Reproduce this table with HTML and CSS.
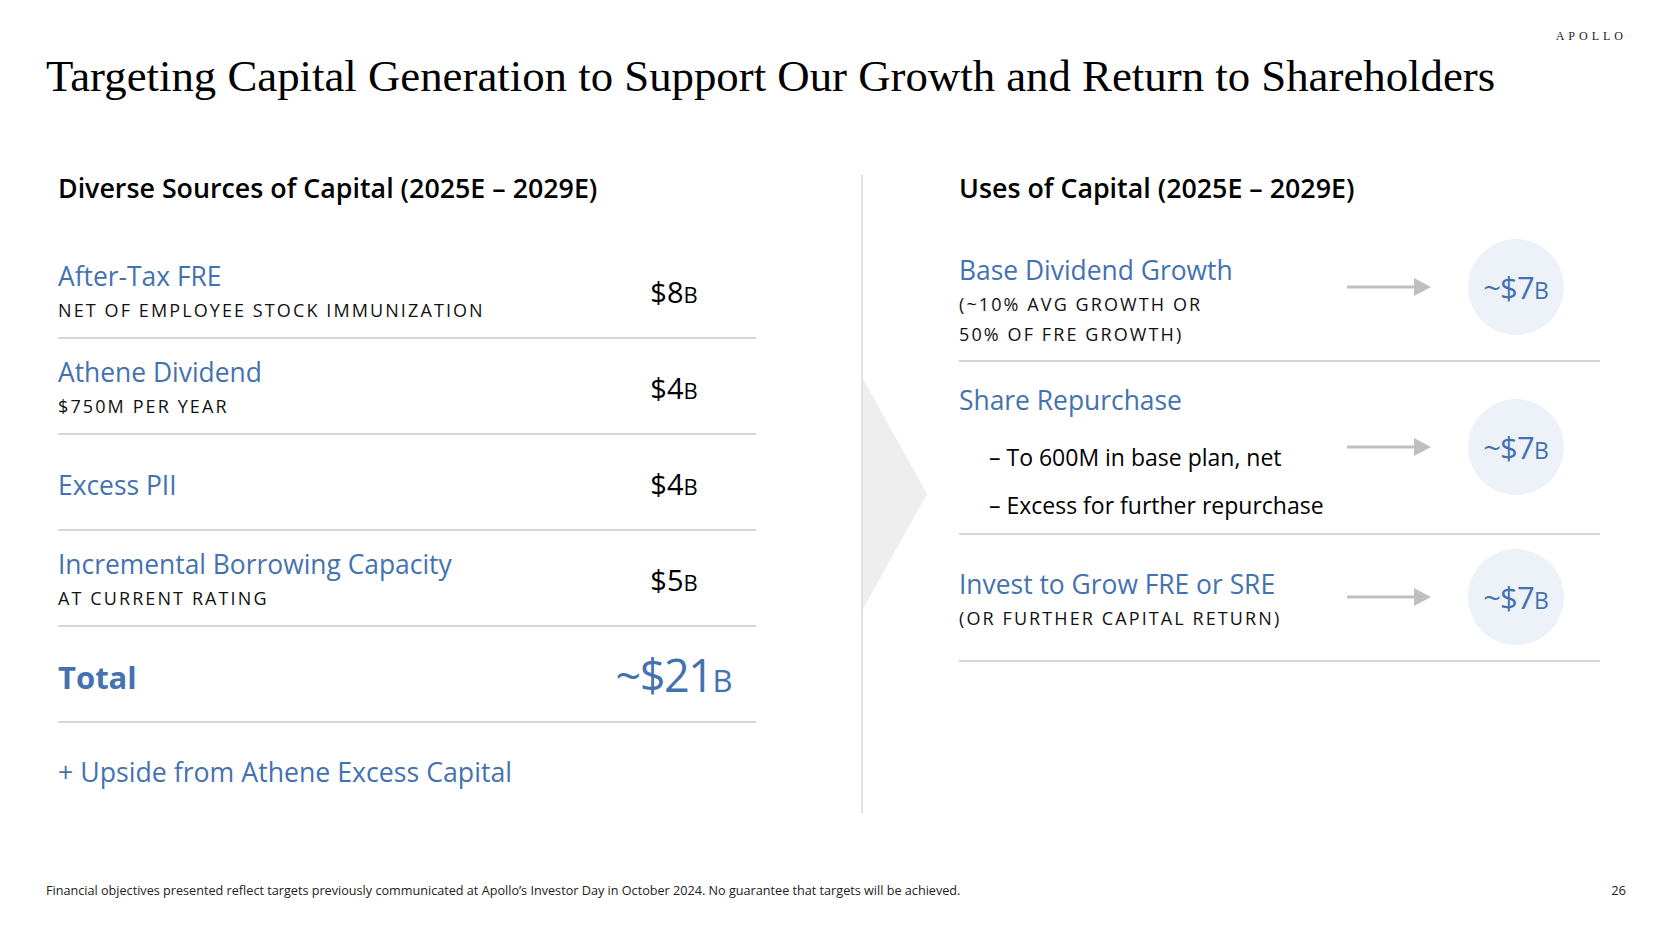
FILE: index.html
```html
<!DOCTYPE html>
<html lang="en">
<head>
<meta charset="utf-8">
<title>Targeting Capital Generation</title>
<link rel="stylesheet" href="styles.css">
</head>
<body>
<div class="slide">
  <header class="top">
    <div class="brand">APOLLO</div>
    <h1 class="title">Targeting Capital Generation to Support Our Growth and Return to Shareholders</h1>
  </header>

  <main class="content">
    <section class="sources">
      <h2 class="col-head">Diverse Sources of Capital (2025E – 2029E)</h2>

      <div class="src-row">
        <div class="src-text">
          <div class="label">After-Tax FRE</div>
          <div class="sub">NET OF EMPLOYEE STOCK IMMUNIZATION</div>
        </div>
        <div class="val">$8<span class="u">B</span></div>
      </div>

      <div class="src-row">
        <div class="src-text">
          <div class="label">Athene Dividend</div>
          <div class="sub">$750M PER YEAR</div>
        </div>
        <div class="val">$4<span class="u">B</span></div>
      </div>

      <div class="src-row">
        <div class="src-text">
          <div class="label">Excess PII</div>
        </div>
        <div class="val">$4<span class="u">B</span></div>
      </div>

      <div class="src-row">
        <div class="src-text">
          <div class="label">Incremental Borrowing Capacity</div>
          <div class="sub">AT CURRENT RATING</div>
        </div>
        <div class="val">$5<span class="u">B</span></div>
      </div>

      <div class="src-row">
        <div class="src-text">
          <div class="total-label">Total</div>
        </div>
        <div class="val total-val">~$21<span class="u">B</span></div>
      </div>

      <div class="upside">+ Upside from Athene Excess Capital</div>
    </section>

    <div class="mid">
      <div class="divider">
        <svg class="chev" width="64" height="230" viewBox="0 0 64 230" aria-hidden="true">
          <polygon points="0,0 64,115 0,230" fill="#eeeeee"/>
        </svg>
      </div>
    </div>

    <section class="uses">
      <h2 class="col-head">Uses of Capital (2025E – 2029E)</h2>

      <div class="use-row r1">
        <div class="use-text">
          <div class="label">Base Dividend Growth</div>
          <div class="sub sub-two">(~10% AVG GROWTH OR<br>50% OF FRE GROWTH)</div>
        </div>
        <div class="flow">
          <svg class="arrow" width="84" height="18" viewBox="0 0 84 18" aria-hidden="true">
            <line x1="0" y1="9" x2="68" y2="9" stroke="#bfbfbf" stroke-width="3"/>
            <polygon points="67,0 84,9 67,18" fill="#bfbfbf"/>
          </svg>
          <div class="circle">~$7<span class="u">B</span></div>
        </div>
      </div>

      <div class="use-row r2">
        <div class="use-text">
          <div class="label">Share Repurchase</div>
          <ul class="bullets">
            <li>– To 600M in base plan, net</li>
            <li>– Excess for further repurchase</li>
          </ul>
        </div>
        <div class="flow">
          <svg class="arrow" width="84" height="18" viewBox="0 0 84 18" aria-hidden="true">
            <line x1="0" y1="9" x2="68" y2="9" stroke="#bfbfbf" stroke-width="3"/>
            <polygon points="67,0 84,9 67,18" fill="#bfbfbf"/>
          </svg>
          <div class="circle">~$7<span class="u">B</span></div>
        </div>
      </div>

      <div class="use-row r3">
        <div class="use-text">
          <div class="label">Invest to Grow FRE or SRE</div>
          <div class="sub">(OR FURTHER CAPITAL RETURN)</div>
        </div>
        <div class="flow">
          <svg class="arrow" width="84" height="18" viewBox="0 0 84 18" aria-hidden="true">
            <line x1="0" y1="9" x2="68" y2="9" stroke="#bfbfbf" stroke-width="3"/>
            <polygon points="67,0 84,9 67,18" fill="#bfbfbf"/>
          </svg>
          <div class="circle">~$7<span class="u">B</span></div>
        </div>
      </div>
    </section>
  </main>

  <footer class="foot">
    <p class="note">Financial objectives presented reflect targets previously communicated at Apollo’s Investor Day in October 2024. No guarantee that targets will be achieved.</p>
    <span class="page">26</span>
  </footer>
</div>
</body>
</html>
```

FILE: styles.css
```css
* { box-sizing: border-box; }

html, body {
  margin: 0;
  padding: 0;
  background: #ffffff;
}

body {
  font-family: "Open Sans", "Noto Sans", sans-serif;
  color: #111111;
}

.slide {
  width: 1666px;
  height: 926px;
  display: flex;
  flex-direction: column;
  overflow: hidden;
}

/* ---------- header ---------- */
.top {
  padding: 26px 39px 0 46px;
}

.brand {
  text-align: right;
  font-family: "Liberation Serif", "DejaVu Serif", serif;
  font-size: 12px;
  line-height: 20px;
  letter-spacing: 4px;
  color: #222222;
}

.title {
  margin: 3px 0 0 0;
  font-family: "Liberation Serif", "DejaVu Serif", serif;
  font-weight: 400;
  font-size: 44.8px;
  line-height: 54px;
  color: #000000;
  white-space: nowrap;
}

/* ---------- main ---------- */
.content {
  display: flex;
  margin-top: 67px;
  padding-left: 58px;
}

.col-head {
  margin: 0;
  font-size: 26.8px;
  font-weight: 600;
  line-height: 36px;
  color: #000000;
  white-space: nowrap;
}

.sources {
  width: 698px;
}

.sources .col-head {
  margin-bottom: 37px;
}

.src-row {
  display: flex;
  align-items: center;
  height: 96px;
  padding-top: 6px;
  border-bottom: 2px solid #d6d6d6;
}

.src-text {
  flex: 1;
  min-width: 0;
}

.label {
  font-size: 26.4px;
  line-height: 34px;
  color: #4472b0;
  white-space: nowrap;
}

.sub {
  font-size: 18px;
  line-height: 34px;
  letter-spacing: 2.1px;
  color: #111111;
  white-space: nowrap;
}

.val {
  width: 150px;
  margin-right: 7px;
  text-align: center;
  font-size: 29px;
  line-height: 40px;
  color: #000000;
  white-space: nowrap;
}

.val .u {
  font-size: 22px;
}

.total-label {
  font-size: 31px;
  font-weight: 700;
  line-height: 44px;
  color: #4472b0;
}

.total-val {
  font-size: 45px;
  line-height: 56px;
  letter-spacing: -1.5px;
  color: #4472b0;
}

.total-val .u {
  font-size: 31px;
  letter-spacing: 0;
}

.upside {
  margin-top: 29px;
  font-size: 26.7px;
  line-height: 40px;
  color: #4472b0;
  white-space: nowrap;
}

/* ---------- middle divider ---------- */
.mid {
  width: 203px;
}

.divider {
  margin-left: 105px;
  margin-top: 5px;
  height: 638px;
  border-left: 2px solid #e2e2e2;
  display: flex;
  align-items: center;
}

.chev {
  display: block;
}

/* ---------- uses ---------- */
.uses {
  width: 641px;
}

.use-row {
  display: flex;
  align-items: flex-start;
  border-bottom: 2px solid #d6d6d6;
}

.use-text {
  flex: 1;
  min-width: 0;
}

.r1 .use-text { padding: 47px 0 11px 0; }
.r2 .use-text { padding: 21px 0 4px 0; }
.r3 .use-text { padding: 32px 0 25px 0; }

.sub-two {
  margin-top: 2px;
  line-height: 30px;
}

.bullets {
  list-style: none;
  margin: 16px 0 0 0;
  padding: 0 0 0 30px;
}

.bullets li {
  font-size: 23px;
  line-height: 48px;
  color: #000000;
  white-space: nowrap;
}

.flow {
  flex-shrink: 0;
  display: flex;
  align-items: center;
  gap: 37px;
  margin-right: 36px;
}

.r1 .flow { margin-top: 33px; }
.r2 .flow { margin-top: 37px; }
.r3 .flow { margin-top: 14px; }

.arrow {
  display: block;
}

.circle {
  width: 96px;
  height: 96px;
  border-radius: 50%;
  background: #edf2f8;
  display: flex;
  align-items: center;
  justify-content: center;
  font-size: 31px;
  letter-spacing: -0.8px;
  color: #4472b0;
  white-space: nowrap;
}

.circle .u {
  font-size: 23px;
  letter-spacing: 0;
  margin-top: 6px;
}

/* ---------- footer ---------- */
.foot {
  margin-top: auto;
  display: flex;
  justify-content: space-between;
  align-items: center;
  padding: 0 40px 26px 46px;
}

.note {
  margin: 0;
  font-size: 12.65px;
  line-height: 20px;
  color: #222222;
}

.page {
  font-size: 13px;
  line-height: 20px;
  color: #222222;
}
```
